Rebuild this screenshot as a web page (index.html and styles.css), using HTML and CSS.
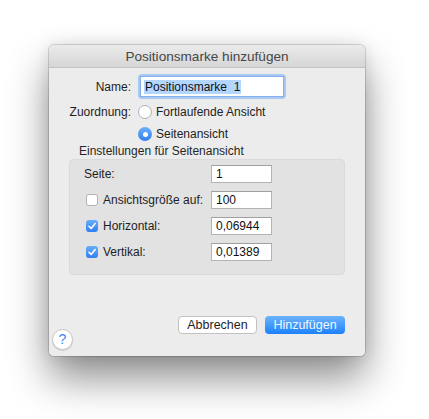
FILE: index.html
```html
<!DOCTYPE html>
<html lang="de">
<head>
<meta charset="utf-8">
<title>Positionsmarke hinzufügen</title>
<link rel="stylesheet" href="styles.css">
</head>
<body>
<div class="stage">
<div class="window">
  <div class="titlebar">Positionsmarke hinzufügen</div>
  <div class="content">
    <div class="top-grid">
      <div class="lbl">Name:</div>
      <div class="focus-ring"><div class="field name-field"><span class="sel">Positionsmarke&nbsp; 1</span></div></div>
      <div class="lbl">Zuordnung:</div>
      <div class="radio-row"><span class="radio"></span><span>Fortlaufende Ansicht</span></div>
      <div></div>
      <div class="radio-row"><span class="radio on"></span><span>Seitenansicht</span></div>
    </div>
    <div class="group-title">Einstellungen für Seitenansicht</div>
    <div class="group">
      <div class="grow">
        <div class="glabel plain">Seite:</div>
        <div class="field small">1</div>
      </div>
      <div class="grow">
        <div class="glabel"><span class="check"></span><span>Ansichtsgröße auf:</span></div>
        <div class="field small">100</div>
      </div>
      <div class="grow">
        <div class="glabel"><span class="check on"><svg viewBox="0 0 12 12" width="12" height="12"><path d="M3 6.3 L5.1 8.4 L9.2 3.6" fill="none" stroke="#fff" stroke-width="1.6" stroke-linecap="round" stroke-linejoin="round"/></svg></span><span>Horizontal:</span></div>
        <div class="field small">0,06944</div>
      </div>
      <div class="grow">
        <div class="glabel"><span class="check on"><svg viewBox="0 0 12 12" width="12" height="12"><path d="M3 6.3 L5.1 8.4 L9.2 3.6" fill="none" stroke="#fff" stroke-width="1.6" stroke-linecap="round" stroke-linejoin="round"/></svg></span><span>Vertikal:</span></div>
        <div class="field small">0,01389</div>
      </div>
    </div>
    <div class="footer">
      <div class="help">?</div>
      <div class="buttons">
        <div class="btn">Abbrechen</div>
        <div class="btn primary">Hinzufügen</div>
      </div>
    </div>
  </div>
</div>
</div>
</body>
</html>
```

FILE: styles.css
```css
html, body {
  margin: 0;
  padding: 0;
  background: #ffffff;
}
body {
  font-family: "Liberation Sans", Arial, sans-serif;
  font-size: 12px;
  color: #222222;
}
.stage {
  width: 429px;
  height: 419px;
  box-sizing: border-box;
  padding: 45px 0 0 49px;
  background: #ffffff;
}
.window {
  width: 316px;
  height: 311px;
  border-radius: 5px;
  display: flex;
  flex-direction: column;
  background: #ececec;
  box-shadow: 0 22px 40px rgba(0, 0, 0, 0.45), 0 0 0 1px rgba(0, 0, 0, 0.14), 0 0 16px rgba(0, 0, 0, 0.1);
}
.titlebar {
  height: 22px;
  line-height: 23px;
  border-bottom: 1px solid #c4c4c4;
  border-radius: 5px 5px 0 0;
  background: linear-gradient(#ebebeb, #d6d6d6);
  text-align: center;
  font-size: 13.6px;
  color: #474747;
}
.content {
  flex: 1;
  background: #ececec;
  border-radius: 0 0 5px 5px;
  display: flex;
  flex-direction: column;
  padding-top: 6px;
}
.top-grid {
  display: grid;
  grid-template-columns: 82px 148px;
  grid-template-rows: 25px 25px 20px;
  column-gap: 7px;
  align-items: center;
}
.lbl {
  text-align: right;
  color: #1e1e1e;
}
.focus-ring {
  height: 25px;
  box-sizing: border-box;
  padding: 2px;
  border-radius: 4px;
  background: #a8c9f4;
}
.field {
  background: #ffffff;
  border: 1px solid #b4b4b4;
  border-top-color: #a0a0a0;
  box-sizing: border-box;
  color: #111111;
}
.name-field {
  height: 21px;
  border-color: #87b0e8;
  padding: 3px 0 0 3px;
  line-height: 13px;
}
.sel {
  background: #b3d6fe;
  padding: 0 1px;
  display: inline-block;
  line-height: 14px;
}
.radio-row {
  display: flex;
  align-items: center;
  gap: 4px;
}
.radio {
  width: 14px;
  height: 14px;
  box-sizing: border-box;
  border-radius: 50%;
  background: #ffffff;
  border: 1px solid #b2b2b2;
  display: flex;
  align-items: center;
  justify-content: center;
}
.radio.on {
  border: none;
  background: linear-gradient(#6db1fb, #2f7ff0);
}
.radio.on::after {
  content: "";
  width: 5px;
  height: 5px;
  border-radius: 50%;
  background: #ffffff;
}
.group-title {
  height: 14px;
  line-height: 14px;
  padding-left: 30px;
  color: #262626;
}
.group {
  margin: 1px 0 0 20px;
  width: 276px;
  box-sizing: border-box;
  background: #e2e2e2;
  border: 1px solid #dadada;
  border-radius: 4px;
  padding: 5px 0 13px 14px;
  display: flex;
  flex-direction: column;
  gap: 8px;
}
.grow {
  display: grid;
  grid-template-columns: 127px 61px;
  height: 18px;
  align-items: center;
}
.glabel {
  display: flex;
  align-items: center;
  gap: 5px;
  padding-left: 2px;
  color: #1e1e1e;
}
.glabel.plain {
  padding-left: 0;
}
.check {
  width: 12px;
  height: 12px;
  box-sizing: border-box;
  border-radius: 3px;
  background: #ffffff;
  border: 1px solid #b2b2b2;
  display: flex;
}
.check.on {
  border: none;
  background: linear-gradient(#69aefb, #2f7ff0);
}
.small {
  height: 18px;
  line-height: 17px;
  padding-left: 4px;
}
.footer {
  margin-top: auto;
  display: flex;
  align-items: flex-end;
  justify-content: space-between;
  padding: 0 20px 6px 3px;
}
.help {
  width: 21px;
  height: 21px;
  box-sizing: border-box;
  border-radius: 50%;
  background: #ffffff;
  border: 1px solid #c6c6c6;
  box-shadow: 0 1px 1px rgba(0, 0, 0, 0.12);
  color: #3d86ef;
  font-size: 14px;
  text-align: center;
  line-height: 19px;
}
.buttons {
  display: flex;
  gap: 8px;
  margin-bottom: 16px;
}
.btn {
  width: 79px;
  height: 18px;
  box-sizing: border-box;
  border-radius: 4px;
  background: #ffffff;
  border: 1px solid #c2c2c2;
  text-align: center;
  line-height: 16px;
  font-size: 12.5px;
  color: #1e1e1e;
}
.btn.primary {
  width: 80px;
  border: none;
  line-height: 18px;
  background: linear-gradient(#6cb4fb, #1d81fa);
  color: #f2f7ff;
}
```
